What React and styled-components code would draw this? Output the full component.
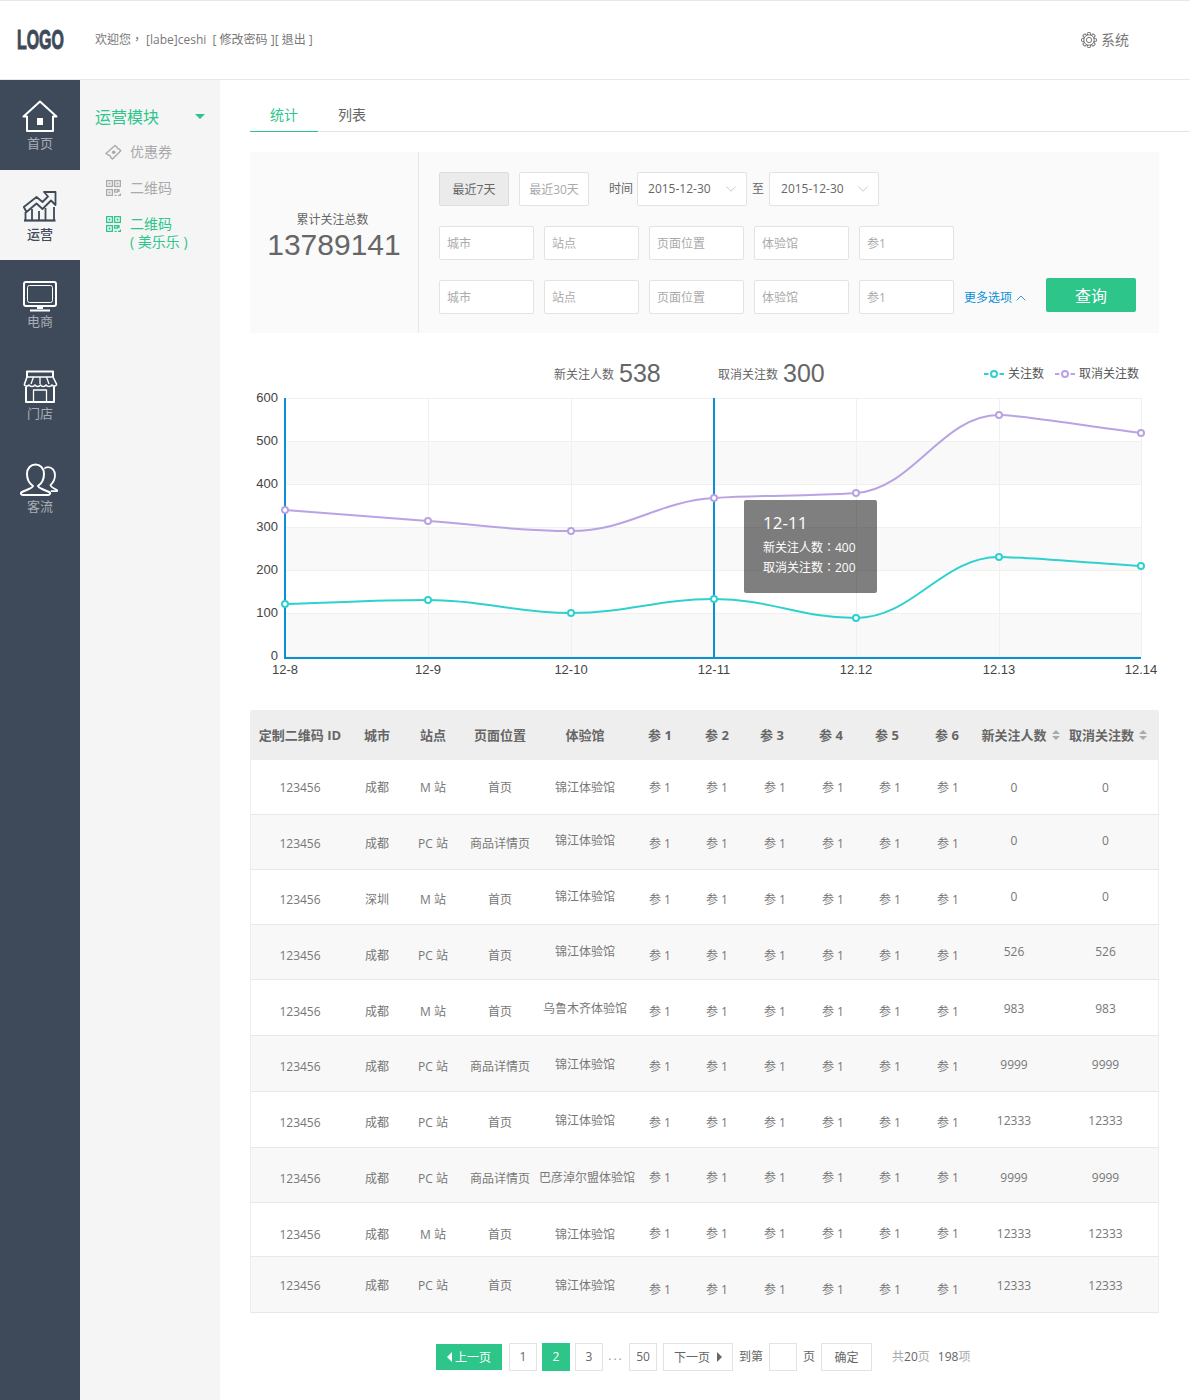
import React from 'react';
import styled, { createGlobalStyle } from 'styled-components';
import { ChevronDown, ChevronUp } from 'lucide-react';

const FONT = `"Open Sans", "Noto Sans CJK SC", sans-serif`;
const GREEN = '#2dc58a';

const GlobalStyle = createGlobalStyle`
  html, body { margin: 0; padding: 0; background: #fff; }
  body { font-family: ${FONT}; color: #666; font-size: 12px; }
  * { box-sizing: border-box; }
`;

const Page = styled.div`
  width: 1190px;
  height: 1400px;
  display: flex;
  flex-direction: column;
  overflow: hidden;
`;

const Header = styled.header`
  height: 80px;
  flex: none;
  display: flex;
  align-items: center;
  border-top: 1px solid #e8e8e8;
  border-bottom: 1px solid #e8e8e8;
  padding-left: 17px;
`;

const Logo = styled.div`
  width: 48px;
  font-family: "Liberation Sans", sans-serif;
  font-weight: 700;
  font-size: 27px;
  color: #3e4a59;
  transform: scaleX(0.59);
  transform-origin: left center;
  -webkit-text-stroke: 1px #3e4a59;
`;

const Welcome = styled.div`
  margin-left: 30px;
  padding-bottom: 3px;
  font-family: "Open Sans", "Noto Sans CJK TC", sans-serif;
  font-size: 12px;
  color: #777;
  white-space: pre;
`;

const SystemLink = styled.div`
  margin-left: auto;
  margin-right: 61px;
  display: flex;
  align-items: center;
  gap: 4px;
  font-size: 14px;
  line-height: 18px;
  color: #777;
`;

const Body = styled.div`
  flex: 1;
  display: flex;
`;

const Rail = styled.nav`
  width: 80px;
  background: #3e4a59;
`;

const RailItem = styled.div`
  height: 90px;
  display: flex;
  flex-direction: column;
  align-items: center;
  padding-top: ${(p) => p.$top}px;
  background: ${(p) => (p.$active ? '#f5f5f5' : 'transparent')};
  color: ${(p) => (p.$active ? '#3e4a59' : '#a9aeb5')};
  font-size: 13px;
  line-height: 16px;
  font-weight: ${(p) => (p.$active ? 500 : 400)};
  svg { display: block; margin-bottom: 1px; }
`;

const SubNav = styled.aside`
  width: 140px;
  background: #f5f5f5;
  padding: 25px 0 0 15px;
`;

const SubTitle = styled.div`
  display: flex;
  align-items: center;
  justify-content: space-between;
  width: 110px;
  height: 22px;
  font-size: 16px;
  color: ${GREEN};
  margin-bottom: 16px;
`;

const Caret = styled.span`
  width: 0;
  height: 0;
  border-left: 5px solid transparent;
  border-right: 5px solid transparent;
  border-top: 5px solid ${GREEN};
`;

const SubItem = styled.div`
  display: flex;
  align-items: flex-start;
  gap: 8px;
  padding-left: 10px;
  font-size: 14px;
  line-height: 18px;
  margin-bottom: 18px;
  color: ${(p) => (p.$active ? GREEN : '#aaa')};
  svg { flex: none; margin-top: 1px; }
`;

const Main = styled.main`
  flex: 1;
  padding: 20px 0 0 30px;
  min-width: 0;
`;

const Tabs = styled.div`
  display: flex;
  height: 32px;
  border-bottom: 1px solid #e5e5e5;
  font-size: 14px;
  line-height: 29px;
`;

const Tab = styled.div`
  padding: 0 20px;
  height: 32px;
  color: ${(p) => (p.$active ? GREEN : '#666')};
  border-bottom: ${(p) => (p.$active ? `1px solid ${GREEN}` : 'none')};
`;

const FilterPanel = styled.section`
  width: 909px;
  height: 181px;
  margin-top: 20px;
  display: flex;
  background: #fafafa;
`;

const TotalBox = styled.div`
  width: 169px;
  flex: none;
  border-right: 1px solid #e8e8e8;
  display: flex;
  flex-direction: column;
  align-items: center;
  padding-top: 59px;
  font-size: 12px;
  color: #666;
  span { line-height: 18px; margin-right: 3px; }
`;

const TotalNumber = styled.div`
  font-family: "Liberation Sans", sans-serif;
  font-size: 30px;
  line-height: 32px;
  color: #666;
`;

const FilterBody = styled.div`
  flex: 1;
  padding: 20px 0 0 20px;
`;

const FilterRow = styled.div`
  display: flex;
  align-items: center;
  height: 34px;
  margin-bottom: 20px;
  line-height: 18px;
`;

const RangeButton = styled.div`
  width: 70px;
  height: 34px;
  line-height: 33px;
  margin-right: 10px;
  text-align: center;
  border: 1px solid ${(p) => (p.$active ? '#ddd' : '#e3e3e3')};
  border-radius: 2px;
  background: ${(p) => (p.$active ? '#ebebeb' : '#fff')};
  color: ${(p) => (p.$active ? '#666' : '#aaa')};
`;

const Label = styled.span`
  margin: 0 ${(p) => p.$right}px 0 ${(p) => p.$left}px;
  color: #666;
`;

const DateSelect = styled.div`
  width: 110px;
  height: 34px;
  padding: 0 6px 1px ${(p) => p.$pad}px;
  display: flex;
  align-items: center;
  justify-content: space-between;
  background: #fff;
  border: 1px solid #e3e3e3;
  border-radius: 2px;
  color: #666;
  font-size: 12px;
  svg { margin-top: 1px; }
`;

const FakeInput = styled.div`
  width: 95px;
  height: 34px;
  line-height: 34px;
  margin-right: 10px;
  padding-left: 7px;
  background: #fff;
  border: 1px solid #e3e3e3;
  border-radius: 2px;
  color: #aaa;
`;

const MoreLink = styled.div`
  display: flex;
  align-items: center;
  gap: 1px;
  padding-top: 2px;
  color: #0b8fd6;
`;

const QueryButton = styled.div`
  width: 90px;
  height: 34px;
  margin: -4px 0 0 17px;
  line-height: 36px;
  text-align: center;
  font-size: 16px;
  color: #fff;
  background: ${GREEN};
  border-radius: 2px;
`;

const ChartSection = styled.section`
  position: relative;
  width: 909px;
  height: 377px;
  padding-top: 24px;
`;

const StatsLine = styled.div`
  display: flex;
  align-items: center;
  height: 32px;
  padding-left: 304px;
`;

const Stat = styled.div`
  display: flex;
  align-items: center;
  gap: 5px;
  width: 164px;
  font-size: 12px;
  color: #666;
  span { padding-top: 3px; line-height: 18px; }
  b {
    font-family: "Liberation Sans", sans-serif;
    font-weight: 400;
    font-size: 25px;
    line-height: 32px;
  }
`;

const Legend = styled.div`
  margin-left: auto;
  margin-right: 20px;
  padding-top: 2px;
  display: flex;
  gap: 11px;
  font-size: 12px;
  line-height: 18px;
  color: #555;
`;

const LegendItem = styled.div`
  display: flex;
  align-items: center;
  gap: 4px;
`;

const ChartSvg = styled.svg`
  display: block;
  margin-top: 1px;
`;

const Tooltip = styled.div`
  position: absolute;
  left: 494px;
  top: 167px;
  width: 133px;
  height: 93px;
  padding: 12px 0 0 19px;
  border-radius: 2px;
  background: rgba(0, 0, 0, 0.5);
  color: #fff;
  font-family: "Open Sans", "Noto Sans CJK TC", sans-serif;
  font-size: 12px;
  line-height: 20px;
  strong {
    display: block;
    font-weight: 400;
    font-size: 17px;
    line-height: 22px;
    margin-bottom: 4px;
  }
`;

const Table = styled.section`
  width: 909px;
`;

const columns = '98px 56px 56px 78px 92px 58px 56px 60px 56px 58px 58px 74px 109px';
const headColumns = '100px 54px 58px 76px 94px 56px 58px 52px 66px 46px 74px 73px 102px';

const HeadRow = styled.div`
  display: grid;
  grid-template-columns: ${headColumns};
  height: 50px;
  align-items: center;
  background: #eee;
  border-radius: 2px 2px 0 0;
  font-size: 13px;
  font-weight: 700;
  color: #666;
  text-align: center;
`;

const HeadCell = styled.div`
  white-space: nowrap;
  display: flex;
  justify-content: center;
  align-items: center;
  gap: 5px;
  line-height: 18px;
`;

const SortMark = styled.span`
  display: inline-flex;
  flex-direction: column;
  gap: 2px;
  &::before, &::after {
    content: '';
    width: 0;
    height: 0;
    border-left: 4px solid transparent;
    border-right: 4px solid transparent;
  }
  &::before { border-bottom: 4px solid #aaa; }
  &::after { border-top: 4px solid #aaa; }
`;

const BodyRow = styled.div`
  display: grid;
  grid-template-columns: ${columns};
  height: ${(p) => p.$h}px;
  align-items: center;
  background: ${(p) => (p.$odd ? '#f8f8f8' : '#fff')};
  border-left: 1px solid #eee;
  border-right: 1px solid #eee;
  border-bottom: 1px solid #e8e8e8;
  text-align: center;
  color: #777;
`;

const Cell = styled.div`
  white-space: nowrap;
  line-height: 18px;
  padding-top: ${(p) => (p.$dy > 0 ? 2 + p.$dy : 2)}px;
  padding-bottom: ${(p) => (p.$dy < 0 ? -p.$dy : 0)}px;
`;

const Pager = styled.div`
  display: flex;
  align-items: center;
  margin-top: 30px;
  padding-left: 186px;
  height: 28px;
  color: #666;
`;

const PageBox = styled.div`
  width: ${(p) => p.$w || 28}px;
  height: ${(p) => p.$h || 28}px;
  margin-right: ${(p) => p.$gap ?? 6}px;
  padding-bottom: 1px;
  border: 1px solid ${(p) => (p.$active ? GREEN : '#e3e3e3')};
  background: ${(p) => (p.$active ? GREEN : '#fff')};
  color: ${(p) => (p.$active ? '#fff' : '#666')};
  display: flex;
  align-items: center;
  justify-content: center;
  gap: 3px;
`;

const Arrow = styled.span`
  width: 0;
  height: 0;
  border-top: 5px solid transparent;
  border-bottom: 5px solid transparent;
  ${(p) => (p.$left ? `border-right: 5px solid #fff;` : `border-left: 5px solid #666; margin-left: 4px;`)}
`;

const Dots = styled.span`
  width: 26px;
  padding-bottom: 3px;
  text-align: center;
  color: #999;
  letter-spacing: 2px;
`;

const PagerText = styled.span`
  margin-right: ${(p) => p.$gap}px;
  padding-bottom: 1px;
  line-height: 18px;
  color: ${(p) => p.$color || '#666'};
  em { font-style: normal; color: #666; }
`;

function HomeIcon() {
  return (
    <svg width="36" height="34" viewBox="0 0 36 34" fill="none" stroke="#fff" strokeWidth="2" strokeLinejoin="round" strokeLinecap="round">
      <path d="M1.500 16.500 18 1.500l16.500 15H31V31H5V16.500z" />
      <rect x="15" y="18" width="6" height="7" fill="#fff" stroke="none" />
    </svg>
  );
}

function ChartIcon() {
  return (
    <svg width="34" height="34" viewBox="0 0 34 34" fill="none" stroke="#3e4a59" strokeWidth="1.800" strokeLinejoin="round">
      <path d="M1 29.500h31.500" strokeWidth="2.200" />
      <path d="M2.500 21v8.500M9 18v11.500M16 20v9.500M22.500 17v12.500M31 16v13.500" />
      <path d="M.8 16 13.500 6l6 5L25 5.500 21 1h11.500v13L28 9.500 19.500 18l-6-5.500L3.500 21z" />
    </svg>
  );
}

function MonitorIcon() {
  return (
    <svg width="34" height="31" viewBox="0 0 34 31" fill="none" stroke="#fff" strokeLinejoin="round">
      <rect x="1" y="1" width="32" height="24" rx="2" strokeWidth="2" />
      <rect x="4.500" y="4.500" width="25" height="17" rx="2" strokeWidth="1" />
      <path d="M14 27h6M7 29.500h20" strokeWidth="2" />
    </svg>
  );
}

function StoreIcon() {
  return (
    <svg width="36" height="34" viewBox="0 0 36 34" fill="none" stroke="#fff" strokeWidth="2" strokeLinejoin="round">
      <path d="M5 7V1.500h26V7" />
      <path d="M5 7h26l3.500 7c.5 2-3 3-4.500 1-1.500 2-4.500 2-6 0-1.500 2-4 2-5.500 0-1.500 2-4 2-5.500 0-1.500 2-4.500 2-6 0-1.500 2-5 1-4.500-1L5 7z" strokeWidth="1.600" />
      <path d="M11.500 7 9 14M18 7v7M24.500 7 27 14" strokeWidth="1.300" />
      <path d="M4 17v15h28V17" />
      <rect x="11.500" y="20" width="13" height="12" strokeWidth="1.300" />
    </svg>
  );
}

function UsersIcon() {
  return (
    <svg width="40" height="34" viewBox="0 0 40 34" fill="none" stroke="#fff" strokeWidth="2" strokeLinecap="round" strokeLinejoin="round">
      <path d="M13 23c-3-2-6-6-6-12C7 5 11 1.500 15.500 1.500S24 5 24 11c0 6-3 10-6 12 0 2 7 4 11 6 2 1 1 3-1 3H3c-2 0-3-2-1-3 4-2 11-4 11-6z" />
      <path d="M25 5c1-.5 2-.8 3-.8 4 0 7 3.300 7 8 0 5-2.500 8-4.500 10 0 1.500 3 3 6 4.500 1 .5 1 1.500 0 1.500h-5" strokeWidth="1.800" />
    </svg>
  );
}

function TicketIcon() {
  return (
    <svg width="17" height="17" viewBox="0 0 17 17" fill="none" stroke="#aaa" strokeWidth="1.400" strokeLinejoin="round">
      <path d="M1 9.500 10 1.500l2 1.500c-.3 1 .6 2 1.800 1.800l2 2L7.500 15l-2-1.800c.3-1.300-.7-2.200-1.900-2z" />
      <circle cx="8.700" cy="8.200" r="1.800" fill="#aaa" stroke="none" />
    </svg>
  );
}

const QrSvg = styled.svg`
  margin-left: 1px;
  margin-right: 1px;
`;

function QrIcon({ color }) {
  return (
    <QrSvg width="15" height="16" viewBox="0 0 15 16" fill="none" stroke={color} strokeWidth="1.300">
      <rect x="0.600" y="0.600" width="5.800" height="5.800" />
      <rect x="8.600" y="0.600" width="5.800" height="5.800" />
      <rect x="0.600" y="9.600" width="5.800" height="5.800" />
      <path d="M2.600 2.600h1.800v1.800H2.600zM10.600 2.600h1.800v1.800h-1.800zM2.600 11.600h1.800v1.800H2.600z" fill={color} stroke="none" />
      <path d="M8.600 9.600h3v2.500h-3zM13 9v3M8.600 15.400h2M12 15.400h2.400v-2" />
    </QrSvg>
  );
}

function GearIcon() {
  const teeth = [0, 45, 90, 135, 180, 225, 270, 315];
  return (
    <svg width="16" height="16" viewBox="0 0 16 16" fill="none" stroke="#777" strokeWidth="1">
      {teeth.map((a) => (
        <rect key={a} x="6.400" y="0.600" width="3.200" height="3" rx="0.600" transform={`rotate(${a} 8 8)`} />
      ))}
      <circle cx="8" cy="8" r="5.200" fill="#fff" />
      <circle cx="8" cy="8" r="2.600" />
    </svg>
  );
}

function LegendMark({ color }) {
  return (
    <svg width="20" height="8" viewBox="0 0 20 8" fill="none" stroke={color} strokeWidth="2">
      <path d="M0 4h4.500M15.500 4H20" />
      <circle cx="10" cy="4" r="3" />
    </svg>
  );
}

const xs = [285, 428, 571, 714, 856, 999, 1141];
const purple = [510, 521, 531, 498, 493, 415, 433];
const teal = [604, 600, 613, 599, 618, 557, 566];
const dayLabels = ['12-8', '12-9', '12-10', '12-11', '12.12', '12.13', '12.14'];
const ticks = [600, 500, 400, 300, 200, 100, 0];
const OX = 250;
const OY = 390;

// flat tangents at the turns, chord slope at both ends, short handle leaving the last turn
function curvePath(ys) {
  const pts = xs.map((x, i) => [x - OX, ys[i] - OY]);
  const last = pts.length - 1;
  const slope = (i) => {
    if (i === 0) return (pts[1][1] - pts[0][1]) / 143;
    if (i === last) return (pts[last][1] - pts[last - 1][1]) / 143;
    const a = pts[i][1] - pts[i - 1][1];
    const b = pts[i + 1][1] - pts[i][1];
    if (a * b <= 0) return 0;
    return (2 * a * b) / (a + b) / 143;
  };
  let d = `M${pts[0][0]} ${pts[0][1]}`;
  for (let i = 1; i < pts.length; i += 1) {
    const [x0, y0] = pts[i - 1];
    const [x1, y1] = pts[i];
    const h = (x1 - x0) * 0.4;
    const out = i === last ? h * 0.4 : h;
    d += ` C${x0 + out} ${y0 + slope(i - 1) * out} ${x1 - h} ${y1 - slope(i) * h} ${x1} ${y1}`;
  }
  return d;
}

function LineChart() {
  const top = 398 - OY;
  const step = 43;
  return (
    <ChartSvg width="909" height="292" viewBox="0 0 909 292">
      {[1, 3, 5].map((i) => (
        <rect key={i} x={285 - OX} y={top + i * step} width={856} height={step} fill="#f9f9f9" />
      ))}
      {ticks.map((t, i) => (
        <g key={t}>
          <path d={`M${285 - OX} ${top + i * step + 0.5}H${1141 - OX}`} stroke="#f0f0f0" />
          <text x={28} y={top + i * step + 4} textAnchor="end" fontSize="13" fill="#444" fontFamily='"Liberation Sans", sans-serif'>{t}</text>
        </g>
      ))}
      {xs.slice(1).map((x) => (
        <path key={x} d={`M${x - OX + 0.5} ${top}V${top + 259}`} stroke="#f0f0f0" />
      ))}
      <path d={`M${285 - OX} ${top}V${top + 260}H${1141 - OX}`} fill="none" stroke="#0b8fd6" strokeWidth="2" />
      <path d={`M${714 - OX} ${top}V${top + 260}`} stroke="#0b8fd6" strokeWidth="2" />
      <path d={curvePath(purple)} fill="none" stroke="#b9a3e3" strokeWidth="2" />
      <path d={curvePath(teal)} fill="none" stroke="#2fd0d0" strokeWidth="2" />
      {xs.map((x, i) => (
        <g key={x}>
          <circle cx={x - OX} cy={purple[i] - OY} r="3" fill="#fff" stroke="#b9a3e3" strokeWidth="2" />
          <circle cx={x - OX} cy={teal[i] - OY} r="3" fill="#fff" stroke="#2fd0d0" strokeWidth="2" />
          <text x={x - OX} y={284} textAnchor="middle" fontSize="13" fill="#444" fontFamily='"Liberation Sans", sans-serif'>{dayLabels[i]}</text>
        </g>
      ))}
    </ChartSvg>
  );
}

const headers = ['定制二维码 ID', '城市', '站点', '页面位置', '体验馆', '参 1', '参 2', '参 3', '参 4', '参 5', '参 6'];

// dy: nudges for [id..page, venue, params, counts], matching the uneven cells of the page
const rows = [
  { h: 55, city: '成都', site: 'M 站', page: '首页', venue: '锦江体验馆', n: '0', dy: [0, 0, 0, 0] },
  { h: 55, city: '成都', site: 'PC 站', page: '商品详情页', venue: '锦江体验馆', n: '0', dy: [2, -4, 2, -4] },
  { h: 55, city: '深圳', site: 'M 站', page: '首页', venue: '锦江体验馆', n: '0', dy: [4, -2, 4, -2] },
  { h: 55, city: '成都', site: 'PC 站', page: '首页', venue: '锦江体验馆', n: '526', dy: [6, -2, 6, -2] },
  { h: 56, city: '成都', site: 'M 站', page: '首页', venue: '乌鲁木齐体验馆', n: '983', dy: [7, 0, 7, 0] },
  { h: 56, city: '成都', site: 'PC 站', page: '商品详情页', venue: '锦江体验馆', n: '9999', dy: [5, 0, 5, 0] },
  { h: 56, city: '成都', site: 'PC 站', page: '首页', venue: '锦江体验馆', n: '12333', dy: [5, 0, 5, 0] },
  { h: 55, city: '成都', site: 'PC 站', page: '商品详情页', venue: '巴彦淖尔盟体验馆', n: '9999', dy: [6, 4, 4, 4] },
  { h: 54, city: '成都', site: 'M 站', page: '首页', venue: '锦江体验馆', n: '12333', dy: [8, 8, 6, 6] },
  { h: 56, city: '成都', site: 'PC 站', page: '首页', venue: '锦江体验馆', n: '12333', dy: [0, 0, 9, 0] },
];

const filterFields = ['城市', '站点', '页面位置', '体验馆', '参1'];

export default function App() {
  return (
    <Page>
      <GlobalStyle />
      <Header>
        <Logo>LOGO</Logo>
        <Welcome>欢迎您， [labe]ceshi  [ 修改密码 ][ 退出 ]</Welcome>
        <SystemLink>
          <GearIcon />
          系统
        </SystemLink>
      </Header>
      <Body>
        <Rail>
          <RailItem $top={20}><HomeIcon />首页</RailItem>
          <RailItem $top={21} $active><ChartIcon />运营</RailItem>
          <RailItem $top={21}><MonitorIcon />电商</RailItem>
          <RailItem $top={20}><StoreIcon />门店</RailItem>
          <RailItem $top={23}><UsersIcon />客流</RailItem>
        </Rail>
        <SubNav>
          <SubTitle>运营模块<Caret /></SubTitle>
          <SubItem><TicketIcon />优惠券</SubItem>
          <SubItem><QrIcon color="#aaa" />二维码</SubItem>
          <SubItem $active><QrIcon color={GREEN} /><div>二维码<br />( 美乐乐 )</div></SubItem>
        </SubNav>
        <Main>
          <Tabs>
            <Tab $active>统计</Tab>
            <Tab>列表</Tab>
          </Tabs>
          <FilterPanel>
            <TotalBox>
              <span>累计关注总数</span>
              <TotalNumber>13789141</TotalNumber>
            </TotalBox>
            <FilterBody>
              <FilterRow>
                <RangeButton $active>最近7天</RangeButton>
                <RangeButton>最近30天</RangeButton>
                <Label $left={10} $right={4}>时间</Label>
                <DateSelect $pad={10}>2015-12-30<ChevronDown size={18} color="#c4c4c4" strokeWidth={1.2} /></DateSelect>
                <Label $left={5} $right={5}>至</Label>
                <DateSelect $pad={11}>2015-12-30<ChevronDown size={18} color="#c4c4c4" strokeWidth={1.2} /></DateSelect>
              </FilterRow>
              <FilterRow>
                {filterFields.map((t) => <FakeInput key={t}>{t}</FakeInput>)}
              </FilterRow>
              <FilterRow>
                {filterFields.map((t) => <FakeInput key={t}>{t}</FakeInput>)}
                <MoreLink>更多选项<ChevronUp size={16} strokeWidth={1.3} /></MoreLink>
                <QueryButton>查询</QueryButton>
              </FilterRow>
            </FilterBody>
          </FilterPanel>
          <ChartSection>
            <StatsLine>
              <Stat><span>新关注人数</span><b>538</b></Stat>
              <Stat><span>取消关注数</span><b>300</b></Stat>
              <Legend>
                <LegendItem><LegendMark color="#2fd0d0" />关注数</LegendItem>
                <LegendItem><LegendMark color="#b9a3e3" />取消关注数</LegendItem>
              </Legend>
            </StatsLine>
            <LineChart />
            <Tooltip>
              <strong>12-11</strong>
              新关注人数：400<br />
              取消关注数：200
            </Tooltip>
          </ChartSection>
          <Table>
            <HeadRow>
              {headers.map((h) => <HeadCell key={h}>{h}</HeadCell>)}
              <HeadCell>新关注人数<SortMark /></HeadCell>
              <HeadCell>取消关注数<SortMark /></HeadCell>
            </HeadRow>
            {rows.map((r, i) => (
              <BodyRow key={i} $h={r.h} $odd={i % 2 === 1}>
                <Cell $dy={r.dy[0]}>123456</Cell>
                <Cell $dy={r.dy[0]}>{r.city}</Cell>
                <Cell $dy={r.dy[0]}>{r.site}</Cell>
                <Cell $dy={r.dy[0]}>{r.page}</Cell>
                <Cell $dy={r.dy[1]}>{r.venue}</Cell>
                {[0, 1, 2, 3, 4, 5].map((k) => <Cell key={k} $dy={r.dy[2]}>参 1</Cell>)}
                <Cell $dy={r.dy[3]}>{r.n}</Cell>
                <Cell $dy={r.dy[3]}>{r.n}</Cell>
              </BodyRow>
            ))}
          </Table>
          <Pager>
            <PageBox $w={66} $h={26} $active $gap={7}><Arrow $left />上一页</PageBox>
            <PageBox $gap={5}>1</PageBox>
            <PageBox $active $gap={5}>2</PageBox>
            <PageBox $gap={0}>3</PageBox>
            <Dots>...</Dots>
            <PageBox>50</PageBox>
            <PageBox $w={70}>下一页<Arrow /></PageBox>
            <PagerText $gap={6}>到第</PagerText>
            <PageBox />
            <PagerText $gap={6}>页</PagerText>
            <PageBox $w={51} $gap={20}>确定</PageBox>
            <PagerText $gap={8} $color="#aaa">共<em>20</em>页</PagerText>
            <PagerText $gap={0} $color="#aaa"><em>198</em>项</PagerText>
          </Pager>
        </Main>
      </Body>
    </Page>
  );
}
